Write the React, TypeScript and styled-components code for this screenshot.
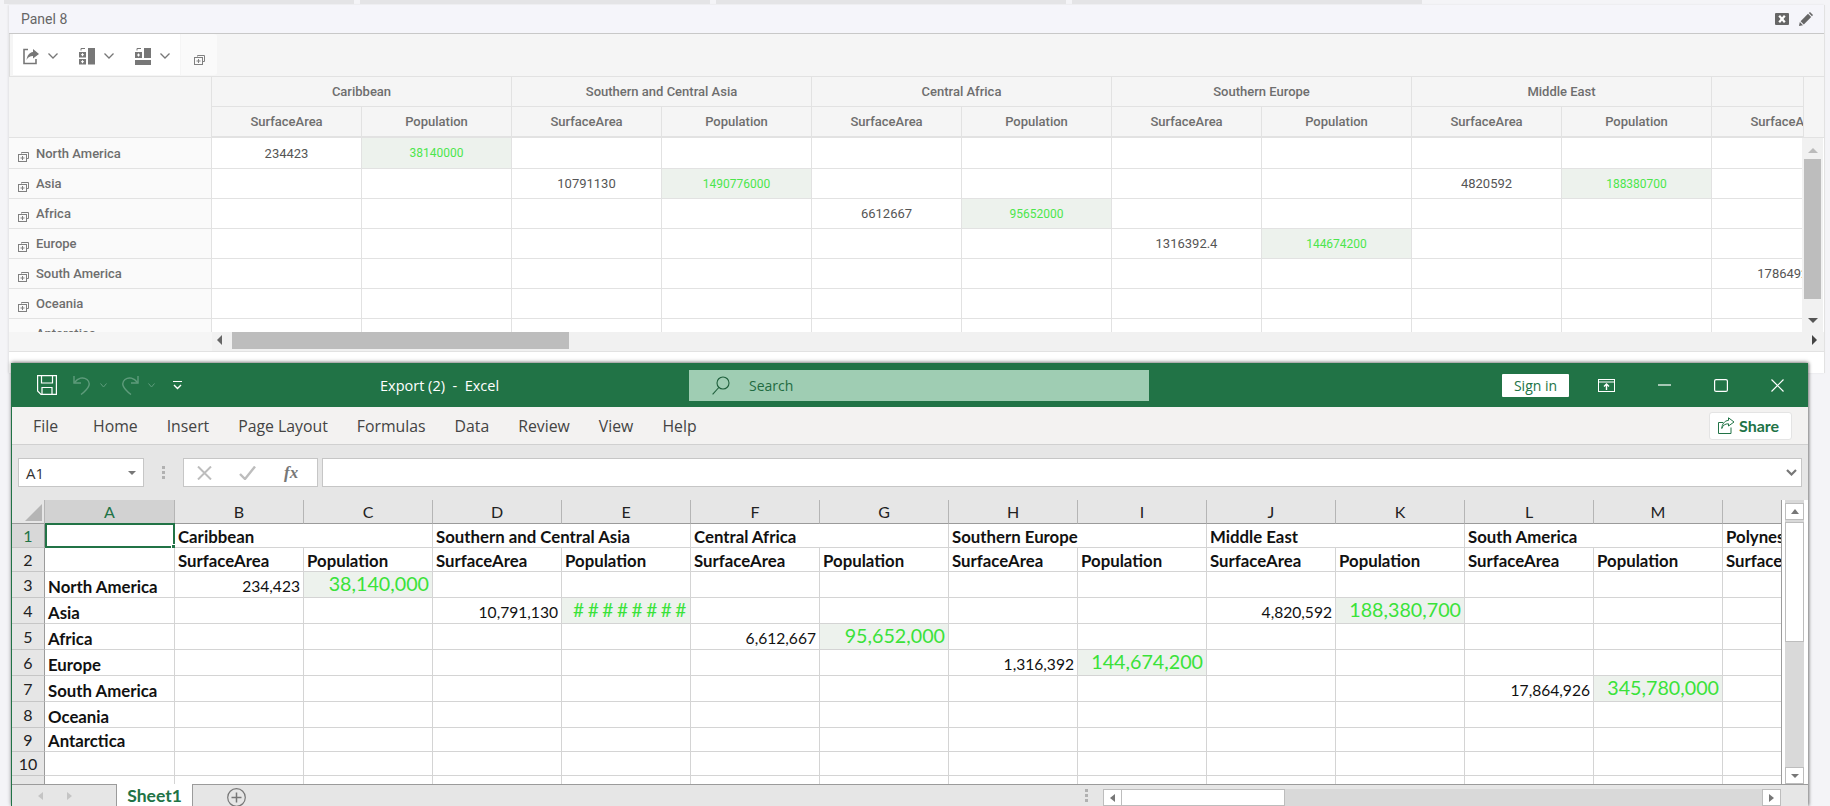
import React from 'react'
import styled, { createGlobalStyle } from 'styled-components'

const GlobalStyle = createGlobalStyle`
  html, body {
    margin: 0;
    padding: 0;
    height: 806px;
    overflow: hidden;
    background-color: #f4f4f7;
  }
`

const Page = styled.div`
  position: relative;
  width: 1830px;
  height: 806px;
  overflow: hidden;
`
const TopStrip = styled.div`
  display: flex;
  gap: 6px;
  height: 5px;
  padding-left: 4px;
`
const StripPiece = styled.div`
  width: 350px;
  height: 4px;
  background-color: #e4e4e6;
`
const Panel = styled.section`
  width: 1815px;
  height: 368px;
  margin-left: 9px;
  background-color: #fff;
  border-right: 1px solid #e2e2e2;
  box-shadow: -1px 0 2px rgba(0, 0, 0, 0.08);
  font-family: Roboto, sans-serif;
`
const PanelHeader = styled.header`
  display: flex;
  align-items: center;
  justify-content: space-between;
  height: 28px;
  padding: 0 11px 0 12px;
  background-color: #f5f5fa;
  border-bottom: 1px solid #c8c8c8;
  font-size: 14px;
  color: #666;
`
const PanelActions = styled.div`
  display: flex;
  align-items: center;
  gap: 10px;
`
const Toolbar = styled.div`
  display: flex;
  height: 42px;
  background-color: #f5f5f5;
  border-bottom: 1px solid #e2e2e2;
  border-left: 1px solid #ddd;
  padding-left: 3px;
`
const ToolGroup = styled.div`
  display: flex;
  align-items: center;
  width: 167px;
  height: 41px;
  padding: 3px 0 0 10px;
  box-sizing: border-box;
  background-color: #fff;
`
const ToolButton = styled.div`
  flex: 0 0 56px;
  display: flex;
  align-items: center;
  gap: 9px;
  svg { display: block; }
`
const ToolSingle = styled.div`
  display: flex;
  justify-content: center;
  width: 36px;
  height: 41px;
  margin-left: 1px;
  padding-top: 21px;
  box-sizing: border-box;
  background-color: #fafafa;
  border-radius: 0 3px 3px 0;
`
const PivotHead = styled.div`
  display: flex;
  height: 60px;
  background-color: #f5f5f5;
  border-bottom: 1px solid #e2e2e2;
  box-sizing: content-box;
`
const PivotCorner = styled.div`
  flex: 0 0 203px;
  box-sizing: border-box;
  border-right: 1px solid #e2e2e2;
`
const PivotHeadClip = styled.div`
  flex: 0 0 1592px;
  overflow: hidden;
  border-right: 1px solid #e2e2e2;
  box-sizing: border-box;
`
const PivotRow = styled.div<{ $h: number }>`
  display: flex;
  height: ${(p) => p.$h}px;
  box-sizing: border-box;
`
const PivotHeadCell = styled.div<{ $w: number }>`
  flex: 0 0 ${(p) => p.$w}px;
  display: flex;
  align-items: center;
  justify-content: center;
  box-sizing: border-box;
  border-right: 1px solid #e2e2e2;
  border-bottom: 1px solid #e2e2e2;
  font-size: 13px;
  color: #6e6e6e;
  font-weight: 500;
  white-space: nowrap;
`
const PivotBody = styled.div`
  display: flex;
  height: 194px;
`
const PivotBodyClip = styled.div`
  flex: 0 0 1793px;
  overflow: hidden;
`
const RowHead = styled.div`
  flex: 0 0 203px;
  display: flex;
  align-items: center;
  gap: 7px;
  padding-left: 9px;
  box-sizing: border-box;
  background-color: #fafafa;
  border-right: 1px solid #e2e2e2;
  border-bottom: 1px solid #e2e2e2;
  font-size: 13px;
  font-weight: 500;
  color: #6e6e6e;
  svg { margin-top: 7px; flex: none; }
`
const ValueCell = styled.div<{ $measure: boolean }>`
  flex: 0 0 150px;
  display: flex;
  align-items: center;
  justify-content: center;
  box-sizing: border-box;
  border-right: 1px solid #e2e2e2;
  border-bottom: 1px solid #e2e2e2;
  background-color: ${(p) => (p.$measure ? '#edf2ed' : '#fff')};
  color: ${(p) => (p.$measure ? '#4ce64c' : '#555')};
  font-size: ${(p) => (p.$measure ? '12px' : '13px')};
  white-space: nowrap;
`
const VBar = styled.div`
  position: relative;
  flex: 0 0 21px;
  background-color: #f1f1f1;
`
const VThumb = styled.div`
  position: absolute;
  left: 2px;
  top: 21px;
  width: 17px;
  height: 140px;
  background-color: #bdbdbd;
`
const ArrowUp = styled.div<{ $c: string }>`
  position: absolute;
  top: 10px;
  left: 6px;
  border: 5px solid transparent;
  border-top: 0;
  border-bottom: 5px solid ${(p) => p.$c};
`
const ArrowDown = styled.div`
  position: absolute;
  bottom: 9px;
  left: 6px;
  border: 5px solid transparent;
  border-bottom: 0;
  border-top: 5px solid #555;
`
const HBarRow = styled.div`
  display: flex;
  height: 19px;
  background-color: #f5f5f5;
  border-bottom: 1px solid #e2e2e2;
  box-sizing: content-box;
`
const HBarTrack = styled.div`
  position: relative;
  flex: 1;
  margin-left: 203px;
  background-color: #f1f1f1;
`
const HThumb = styled.div`
  position: absolute;
  left: 20px;
  top: 0;
  width: 337px;
  height: 17px;
  background-color: #bdbdbd;
`
const ArrowLeft = styled.div<{ $c: string }>`
  position: absolute;
  top: 3px;
  left: 5px;
  border: 5px solid transparent;
  border-left: 0;
  border-right: 5px solid ${(p) => p.$c};
`
const ArrowRight = styled.div`
  position: absolute;
  top: 3px;
  right: 7px;
  border: 5px solid transparent;
  border-right: 0;
  border-left: 5px solid #444;
`

/* the Excel window lies over the panel */
const ExcelWindow = styled.div`
  position: absolute;
  left: 11px;
  top: 363px;
  width: 1796px;
  height: 443px;
  background-color: #e6e6e6;
  border-left: 1px solid #217346;
  box-shadow: 0 -1px 4px rgba(0, 0, 0, 0.35), 1px 0 3px rgba(0, 0, 0, 0.35);
  font-family: Lato, 'Open Sans', sans-serif;
  overflow: hidden;
`
const TitleBar = styled.div`
  position: relative;
  display: flex;
  align-items: center;
  height: 44px;
  background-color: #217346;
  color: #fff;
`
const QuickAccess = styled.div`
  display: flex;
  align-items: center;
  padding-left: 25px;
  flex: 0 0 368px;
  box-sizing: border-box;
  svg { display: block; flex: none; }
`
const WindowTitle = styled.div`
  flex: 0 0 309px;
  font-family: 'Open Sans', sans-serif;
  font-size: 14.5px;
  white-space: pre;
`
const SearchBox = styled.div`
  display: flex;
  align-items: center;
  gap: 19px;
  width: 460px;
  height: 31px;
  padding-left: 23px;
  box-sizing: border-box;
  background-color: #9fcdb3;
  color: #1f6b41;
  font-family: 'Open Sans', sans-serif;
  font-size: 14px;
`
const SignIn = styled.div`
  margin-left: 353px;
  width: 67px;
  height: 23px;
  display: flex;
  align-items: center;
  justify-content: center;
  background-color: #fff;
  border-radius: 1px;
  color: #217346;
  font-family: 'Open Sans', sans-serif;
  font-size: 14px;
`
const WindowControls = styled.div`
  display: flex;
  align-items: center;
  margin-left: 29px;
  svg { display: block; }
`
const ControlSlot = styled.div<{ $w: number }>`
  flex: 0 0 ${(p) => p.$w}px;
`
const MenuBar = styled.nav`
  display: flex;
  align-items: center;
  gap: 29px;
  height: 37px;
  padding: 0 16px 0 21px;
  background-color: #f3f2f1;
  border-bottom: 1px solid #d0d0d0;
  font-family: 'Open Sans', sans-serif;
  font-size: 15.8px;
  color: #444;
`
const MenuItem = styled.span<{ $first?: boolean }>`
  margin-right: ${(p) => (p.$first ? '6px' : '0')};
`
const ShareButton = styled.div`
  display: flex;
  align-items: center;
  gap: 4px;
  width: 83px;
  height: 28px;
  padding-left: 8px;
  margin-left: auto;
  box-sizing: border-box;
  background-color: #fff;
  border: 1px solid #e4e4e4;
  border-radius: 3px;
  color: #217346;
  font-family: Lato, sans-serif;
  font-weight: 700;
  font-size: 16px;
`
const FormulaBar = styled.div`
  display: flex;
  align-items: center;
  height: 55px;
  padding: 13px 6px;
  box-sizing: border-box;
`
const NameBox = styled.div`
  display: flex;
  align-items: center;
  justify-content: space-between;
  width: 126px;
  height: 29px;
  padding: 0 7px;
  box-sizing: border-box;
  background-color: #fff;
  border: 1px solid #c6c6c6;
  font-family: 'Open Sans', sans-serif;
  font-size: 15px;
  color: #333;
`
const CaretDown = styled.div`
  border: 4px solid transparent;
  border-bottom: 0;
  border-top: 4px solid #777;
`
const GripDots = styled.div`
  display: flex;
  flex-direction: column;
  gap: 2px;
  margin: 0 18px;
  i {
    display: block;
    width: 3px;
    height: 3px;
    background-color: #b1b1b1;
  }
`
const FormulaButtons = styled.div`
  display: flex;
  align-items: center;
  width: 135px;
  height: 29px;
  padding-left: 13px;
  gap: 27px;
  box-sizing: border-box;
  background-color: #fff;
  border: 1px solid #c6c6c6;
  color: #777;
  svg { display: block; flex: none; }
`
const FxLabel = styled.span`
  font-family: 'Liberation Serif', serif;
  font-style: italic;
  font-weight: 700;
  font-size: 17px;
  margin-left: 1px;
`
const FormulaInput = styled.div`
  flex: 1;
  display: flex;
  align-items: center;
  justify-content: flex-end;
  height: 29px;
  margin-left: 4px;
  padding-right: 4px;
  box-sizing: border-box;
  background-color: #fff;
  border: 1px solid #c6c6c6;
`
const SheetArea = styled.div`
  display: flex;
  height: 284px;
  background-color: #fff;
`
const SheetClip = styled.div`
  flex: 0 0 1769px;
  height: 284px;
  overflow: hidden;
  border-right: 1px solid #9b9b9b;
  box-sizing: content-box;
`
const SheetGrid = styled.div`
  display: grid;
  grid-template-columns: 33px 130px repeat(13, 129px);
  grid-template-rows: 24px 24px 24px 26px 26px 26px 26px 26px 26px 24px 24px 26px;
  width: 1840px;
  font-size: 15.6px;
  color: #111;
`
const ColHead = styled.div<{ $active?: boolean }>`
  display: flex;
  align-items: center;
  justify-content: center;
  box-sizing: border-box;
  background-color: ${(p) => (p.$active ? '#d2d2d2' : '#e6e6e6')};
  color: ${(p) => (p.$active ? '#217346' : '#222')};
  border-right: 1px solid #b5b5b5;
  border-bottom: 1px solid #9b9b9b;
  font-size: 16px;
`
const CornerCell = styled.div`
  position: relative;
  background-color: #e6e6e6;
  border-bottom: 1px solid #9b9b9b;
  border-right: 1px solid #b5b5b5;
  box-sizing: border-box;
  &::after {
    content: '';
    position: absolute;
    right: 2px;
    bottom: 2px;
    border-style: solid;
    border-width: 0 0 17px 17px;
    border-color: transparent transparent #b5b5b5 transparent;
  }
`
const RowNum = styled.div<{ $active?: boolean }>`
  display: flex;
  align-items: center;
  justify-content: center;
  box-sizing: border-box;
  background-color: ${(p) => (p.$active ? '#d8d8d8' : '#e6e6e6')};
  color: ${(p) => (p.$active ? '#217346' : '#222')};
  border-right: 1px solid #9b9b9b;
  border-bottom: 1px solid #c6c6c6;
  font-size: 16px;
`
const Cell = styled.div<{ $span?: number; $bold?: boolean; $right?: boolean; $big?: boolean }>`
  position: relative;
  display: flex;
  align-items: ${(p) => (p.$big ? 'flex-start' : 'flex-end')};
  justify-content: ${(p) => (p.$right ? 'flex-end' : 'flex-start')};
  grid-column: span ${(p) => p.$span ?? 1};
  padding: 0 3px;
  box-sizing: border-box;
  overflow: hidden;
  white-space: nowrap;
  background-color: ${(p) => (p.$big ? '#edf2ed' : '#fff')};
  border-right: 1px solid #d4d4d4;
  border-bottom: 1px solid #d4d4d4;
  color: ${(p) => (p.$big ? '#3ae23a' : '#111')};
  font-weight: ${(p) => (p.$bold ? 700 : 400)};
  font-size: ${(p) => (p.$big ? '19.7px' : p.$bold ? '16.8px' : '15.6px')};
  line-height: ${(p) => (p.$big ? '24px' : '21px')};
`
const HashFill = styled.span`
  letter-spacing: 3.6px;
  margin-right: -3px;
  font-size: 19px;
`
const SelectionBox = styled.div`
  position: relative;
  border: 2px solid #217346;
  margin: -1px 0 0 0;
  box-sizing: border-box;
  &::after {
    content: '';
    position: absolute;
    right: -4px;
    bottom: -4px;
    width: 6px;
    height: 6px;
    background-color: #217346;
    border: 1px solid #fff;
    box-sizing: border-box;
  }
`
const SheetVBar = styled.div`
  position: relative;
  flex: 0 0 19px;
  margin-left: 3px;
  background-color: #d9d9d9;
`
const SheetArrowBtn = styled.div<{ $bottom?: boolean }>`
  position: absolute;
  left: 0;
  ${(p) => (p.$bottom ? 'bottom: 0;' : 'top: 3px;')}
  width: 19px;
  height: 17px;
  display: flex;
  align-items: center;
  justify-content: center;
  box-sizing: border-box;
  background-color: #fff;
  border: 1px solid #bdbdbd;
`
const SheetVThumb = styled.div`
  position: absolute;
  left: 0;
  top: 22px;
  width: 19px;
  height: 120px;
  box-sizing: border-box;
  background-color: #fff;
  border: 1px solid #bdbdbd;
`
const TriUp = styled.div`
  border: 4px solid transparent;
  border-top: 0;
  border-bottom: 5px solid #777;
`
const TriLeft = styled.div<{ $c?: string }>`
  border: 4px solid transparent;
  border-left: 0;
  border-right: 5px solid ${(p) => p.$c ?? '#777'};
`
const TriRight = styled.div<{ $c?: string }>`
  border: 4px solid transparent;
  border-right: 0;
  border-left: 5px solid ${(p) => p.$c ?? '#777'};
`
const TabBar = styled.div`
  display: flex;
  align-items: flex-end;
  height: 22px;
  background-color: #e6e6e6;
  box-shadow: inset 0 1px 0 #9b9b9b;
`
const TabNav = styled.div`
  display: flex;
  align-items: center;
  gap: 24px;
  flex: 0 0 104px;
  height: 21px;
  padding-left: 26px;
  box-sizing: border-box;
`
const SheetTab = styled.div`
  flex: 0 0 77px;
  height: 22px;
  display: flex;
  align-items: center;
  justify-content: center;
  box-sizing: border-box;
  background-color: #fff;
  border-left: 1px solid #9b9b9b;
  border-right: 1px solid #9b9b9b;
  color: #217346;
  font-weight: 700;
  font-size: 17.5px;
`
const AddSheet = styled.div`
  flex: 0 0 892px;
  height: 21px;
  padding-left: 34px;
  box-sizing: border-box;
  svg { display: block; margin-top: 3px; }
`
const TabGrip = styled(GripDots)`
  margin: 0 15px 0 0;
  height: 21px;
  justify-content: center;
`
const SheetHBar = styled.div`
  display: flex;
  height: 17px;
  width: 678px;
  background-color: #d9d9d9;
`
const HBtn = styled.div`
  flex: 0 0 19px;
  display: flex;
  align-items: center;
  justify-content: center;
  box-sizing: border-box;
  background-color: #fff;
  border: 1px solid #bdbdbd;
`
const HBarThumb = styled.div`
  flex: 0 0 163px;
  background-color: #fff;
  border: 1px solid #bdbdbd;
  border-left: 0;
  box-sizing: border-box;
  margin-right: auto;
`

const ExpandIcon = () => (
  <svg width="11" height="10" viewBox="0 0 11 10" fill="none" stroke="#808080" strokeWidth="1">
    <path d="M3.5 1.5V0.5H10.5V6.5H8.5" />
    <rect x="0.5" y="2.5" width="8" height="7" />
    <path d="M2.5 6H6.5M4.5 4V8" />
  </svg>
)
const ChevronIcon = () => (
  <svg width="10" height="6" viewBox="0 0 10 6" fill="none" stroke="#777" strokeWidth="1.3">
    <path d="M0.5 0.5L5 5L9.5 0.5" />
  </svg>
)
const ExportIcon = () => (
  <svg width="16" height="17" viewBox="0 0 16 17" fill="none">
    <path d="M5 1.5H1V15.5H13V11" stroke="#777" strokeWidth="1.6" />
    <path d="M10 1L16 6L10 10.5V8C7 8 5 9 3.6 12C4 8 6 4.5 10 4Z" fill="#777" />
  </svg>
)
const ColumnsIcon = () => (
  <svg width="16" height="17" viewBox="0 0 16 17" fill="none">
    <path d="M2 2.5V0.5H6" stroke="#777" />
    <rect x="0" y="4" width="7" height="5.5" fill="#777" />
    <rect x="0" y="11" width="7" height="5.5" fill="#777" />
    <path d="M2 6.7H5M3.5 5.2V8.2M2 13.7H5M3.5 12.2V15.2" stroke="#fff" />
    <rect x="9" y="0" width="7" height="16.5" fill="#777" />
  </svg>
)
const RowsIcon = () => (
  <svg width="16" height="17" viewBox="0 0 16 17" fill="none">
    <path d="M2 2.5V0.5H6" stroke="#777" />
    <rect x="0" y="4" width="7" height="6" fill="#777" />
    <path d="M2 7H5M3.5 5.5V8.5" stroke="#fff" />
    <rect x="9" y="0" width="7" height="10" fill="#777" />
    <rect x="0" y="12" width="16" height="5" fill="#777" />
  </svg>
)
const CloseBoxIcon = () => (
  <svg width="14" height="12" viewBox="0 0 14 12">
    <rect width="14" height="12" rx="1" fill="#666" />
    <path d="M4.2 2.8L9.8 9.2M9.8 2.8L4.2 9.2" stroke="#fff" strokeWidth="2.2" />
  </svg>
)
const PencilIcon = () => (
  <svg width="14" height="14" viewBox="0 0 14 14">
    <path d="M0 14L0.8 10L4 13.2Z" fill="#666" />
    <path d="M1.6 9.2L9 1.8L12.2 5L4.8 12.4Z" fill="#666" />
    <path d="M9.8 1L11 0L14 3L13 4.2Z" fill="#666" />
  </svg>
)
const SaveIcon = () => (
  <svg width="20" height="20" viewBox="0 0 20 20" fill="none" stroke="#fff" strokeWidth="1.2">
    <path d="M0.6 0.6H19.4V19.4H4L0.6 16Z" />
    <path d="M4.5 0.6V8H15.5V0.6M5 19.4V12.5H15V19.4" />
  </svg>
)
const UndoIcon = ({ flip }: { flip?: boolean }) => (
  <svg width="18" height="20" viewBox="0 0 18 20" fill="none" stroke="#5f9c7c" strokeWidth="1.4"
    transform={flip ? 'scale(-1 1)' : undefined}>
    <path d="M1 1V8H8" />
    <path d="M1.5 7.5C5 3 10 1.5 14 4.5C18 8 17 12.5 8 19.5" />
  </svg>
)
const SmallChevron = () => (
  <svg width="7" height="5" viewBox="0 0 7 5" fill="none" stroke="#5f9c7c" strokeWidth="1">
    <path d="M0.5 0.5L3.5 4L6.5 0.5" />
  </svg>
)
const CustomizeIcon = () => (
  <svg width="9" height="9" viewBox="0 0 9 9" fill="none" stroke="#fff" strokeWidth="1">
    <path d="M0 0.5H9" />
    <path d="M1 4L4.5 7.5L8 4" strokeWidth="1.4" />
  </svg>
)
const SearchIcon = () => (
  <svg width="18" height="19" viewBox="0 0 18 19" fill="none" stroke="#1f5f3c" strokeWidth="1.1">
    <circle cx="11" cy="7" r="6" />
    <path d="M6.8 11.5L0.6 18.4" />
  </svg>
)
const RibbonIcon = () => (
  <svg width="17" height="13" viewBox="0 0 17 13" fill="none" stroke="#fff" strokeWidth="1">
    <rect x="0.5" y="0.5" width="16" height="12" />
    <path d="M0.5 3H16.5" />
    <path d="M8.5 11V5.5M6 7.5L8.5 5L11 7.5" strokeWidth="1.4" />
  </svg>
)
const MinimizeIcon = () => (
  <svg width="13" height="2" viewBox="0 0 13 2">
    <path d="M0 1H13" stroke="#fff" strokeWidth="1.2" />
  </svg>
)
const MaximizeIcon = () => (
  <svg width="14" height="13" viewBox="0 0 14 13" fill="none">
    <rect x="0.6" y="0.6" width="12.8" height="11.8" rx="1.5" stroke="#fff" strokeWidth="1.2" />
  </svg>
)
const CloseIcon = () => (
  <svg width="13" height="13" viewBox="0 0 13 13">
    <path d="M0.5 0.5L12.5 12.5M12.5 0.5L0.5 12.5" stroke="#fff" strokeWidth="1.2" />
  </svg>
)
const ShareIcon = () => (
  <svg width="17" height="17" viewBox="0 0 17 17" fill="none" stroke="#217346" strokeWidth="1">
    <path d="M5 5.5H0.5V16.5H13V10.5" />
    <path d="M10.5 0.8L16 5L10.5 9V6.8C7 6.8 5 8 3.8 11.5C4 7 6.5 3.7 10.5 3.4Z" />
  </svg>
)
const CrossIcon = () => (
  <svg width="15" height="14" viewBox="0 0 15 14">
    <path d="M1 0.5L14 13.5M14 0.5L1 13.5" stroke="#bdbdbd" strokeWidth="2" />
  </svg>
)
const CheckIcon = () => (
  <svg width="17" height="14" viewBox="0 0 17 14" fill="none">
    <path d="M1 8L6 13L16 0.5" stroke="#bdbdbd" strokeWidth="2.4" />
  </svg>
)
const ThickChevron = () => (
  <svg width="11" height="7" viewBox="0 0 11 7" fill="none" stroke="#777" strokeWidth="2.2">
    <path d="M1 1L5.5 5.5L10 1" />
  </svg>
)
const PlusCircle = () => (
  <svg width="19" height="19" viewBox="0 0 19 19" fill="none" stroke="#777" strokeWidth="1.2">
    <circle cx="9.5" cy="9.5" r="8.8" />
    <path d="M4.5 9.5H14.5M9.5 4.5V14.5" strokeWidth="1.5" />
  </svg>
)

const pivotGroups = ['Caribbean', 'Southern and Central Asia', 'Central Africa', 'Southern Europe', 'Middle East', 'South America']
const pivotRows: { name: string; values: Record<number, string> }[] = [
  { name: 'North America', values: { 0: '234423', 1: '38140000' } },
  { name: 'Asia', values: { 2: '10791130', 3: '1490776000', 8: '4820592', 9: '188380700' } },
  { name: 'Africa', values: { 4: '6612667', 5: '95652000' } },
  { name: 'Europe', values: { 6: '1316392.4', 7: '144674200' } },
  { name: 'South America', values: { 10: '17864926', 11: '345780000' } },
  { name: 'Oceania', values: {} },
  { name: 'Antarctica', values: {} },
]
const measureColumns = Array.from({ length: 12 }, (_, i) => i)

const menuItems = ['Home', 'Insert', 'Page Layout', 'Formulas', 'Data', 'Review', 'View', 'Help']
const sheetColumns = ['A', 'B', 'C', 'D', 'E', 'F', 'G', 'H', 'I', 'J', 'K', 'L', 'M', 'N']
const sheetGroups = [...pivotGroups, 'Polynesia']
const dataColumns = sheetColumns.slice(1)
const sheetRows: { row: number; label: string; values: Record<string, string> }[] = [
  { row: 3, label: 'North America', values: { B: '234,423', C: '38,140,000' } },
  { row: 4, label: 'Asia', values: { D: '10,791,130', E: '########', J: '4,820,592', K: '188,380,700' } },
  { row: 5, label: 'Africa', values: { F: '6,612,667', G: '95,652,000' } },
  { row: 6, label: 'Europe', values: { H: '1,316,392', I: '144,674,200' } },
  { row: 7, label: 'South America', values: { L: '17,864,926', M: '345,780,000' } },
  { row: 8, label: 'Oceania', values: {} },
  { row: 9, label: 'Antarctica', values: {} },
  { row: 10, label: '', values: {} },
  { row: 11, label: '', values: {} },
]
const isPopulation = (col: string) => dataColumns.indexOf(col) % 2 === 1

const PivotPanel = () => (
  <Panel>
    <PanelHeader>
      <span>Panel 8</span>
      <PanelActions>
        <CloseBoxIcon />
        <PencilIcon />
      </PanelActions>
    </PanelHeader>
    <Toolbar>
      <ToolGroup>
        <ToolButton><ExportIcon /><ChevronIcon /></ToolButton>
        <ToolButton><ColumnsIcon /><ChevronIcon /></ToolButton>
        <ToolButton><RowsIcon /><ChevronIcon /></ToolButton>
      </ToolGroup>
      <ToolSingle><ExpandIcon /></ToolSingle>
    </Toolbar>
    <PivotHead>
      <PivotCorner />
      <PivotHeadClip>
        <PivotRow $h={30}>
          {pivotGroups.map((g) => (
            <PivotHeadCell key={g} $w={300}>{g}</PivotHeadCell>
          ))}
        </PivotRow>
        <PivotRow $h={30}>
          {measureColumns.map((i) => (
            <PivotHeadCell key={i} $w={150}>{i % 2 === 0 ? 'SurfaceArea' : 'Population'}</PivotHeadCell>
          ))}
        </PivotRow>
      </PivotHeadClip>
    </PivotHead>
    <PivotBody>
      <PivotBodyClip>
        {pivotRows.map((r, idx) => (
          <PivotRow key={r.name} $h={idx === 0 ? 31 : 30}>
            <RowHead><ExpandIcon /><span>{r.name}</span></RowHead>
            {measureColumns.map((i) => (
              <ValueCell key={i} $measure={r.values[i] !== undefined && i % 2 === 1}>{r.values[i]}</ValueCell>
            ))}
          </PivotRow>
        ))}
      </PivotBodyClip>
      <VBar>
        <ArrowUp $c="#bbb" />
        <VThumb />
        <ArrowDown />
      </VBar>
    </PivotBody>
    <HBarRow>
      <HBarTrack>
        <ArrowLeft $c="#666" />
        <HThumb />
        <ArrowRight />
      </HBarTrack>
    </HBarRow>
  </Panel>
)

const ExcelTitle = () => (
  <TitleBar>
    <QuickAccess>
      <SaveIcon />
      <ControlSlot $w={16} />
      <UndoIcon />
      <ControlSlot $w={9} />
      <SmallChevron />
      <ControlSlot $w={14} />
      <UndoIcon flip />
      <ControlSlot $w={9} />
      <SmallChevron />
      <ControlSlot $w={18} />
      <CustomizeIcon />
    </QuickAccess>
    <WindowTitle>{'Export (2)  -  Excel'}</WindowTitle>
    <SearchBox>
      <SearchIcon />
      <span>Search</span>
    </SearchBox>
    <SignIn>Sign in</SignIn>
    <WindowControls>
      <RibbonIcon />
      <ControlSlot $w={43} />
      <MinimizeIcon />
      <ControlSlot $w={43} />
      <MaximizeIcon />
      <ControlSlot $w={43} />
      <CloseIcon />
    </WindowControls>
  </TitleBar>
)

const ExcelSheet = () => (
  <SheetArea>
    <SheetClip>
      <SheetGrid>
        <CornerCell />
        {sheetColumns.map((c) => (
          <ColHead key={c} $active={c === 'A'}>{c}</ColHead>
        ))}

        <RowNum $active>1</RowNum>
        <SelectionBox />
        {sheetGroups.map((g, i) => (
          <Cell key={g} $bold $span={i < 6 ? 2 : 1}>{g}</Cell>
        ))}

        <RowNum>2</RowNum>
        <Cell />
        {dataColumns.map((c) => (
          <Cell key={c} $bold>{isPopulation(c) ? 'Population' : 'SurfaceArea'}</Cell>
        ))}

        {sheetRows.map((r) => (
          <React.Fragment key={r.row}>
            <RowNum>{r.row}</RowNum>
            <Cell $bold>{r.label}</Cell>
            {dataColumns.map((c) => {
              const value = r.values[c]
              const big = value !== undefined && isPopulation(c)
              return (
                <Cell key={c} $right $big={big}>
                  {value === '########' ? <HashFill>{value}</HashFill> : value}
                </Cell>
              )
            })}
          </React.Fragment>
        ))}
      </SheetGrid>
    </SheetClip>
    <SheetVBar>
      <SheetArrowBtn><TriUp /></SheetArrowBtn>
      <SheetVThumb />
      <SheetArrowBtn $bottom><CaretDown /></SheetArrowBtn>
    </SheetVBar>
  </SheetArea>
)

const ExcelTabs = () => (
  <TabBar>
    <TabNav>
      <TriLeft $c="#c4c4c4" />
      <TriRight $c="#c4c4c4" />
    </TabNav>
    <SheetTab>Sheet1</SheetTab>
    <AddSheet><PlusCircle /></AddSheet>
    <TabGrip><i /><i /><i /></TabGrip>
    <SheetHBar>
      <HBtn><TriLeft /></HBtn>
      <HBarThumb />
      <HBtn><TriRight /></HBtn>
    </SheetHBar>
  </TabBar>
)

const App = () => (
  <Page>
    <GlobalStyle />
    <TopStrip>
      <StripPiece />
      <StripPiece />
      <StripPiece />
      <StripPiece />
    </TopStrip>
    <PivotPanel />
    <ExcelWindow>
      <ExcelTitle />
      <MenuBar>
        <MenuItem $first>File</MenuItem>
        {menuItems.map((m) => (
          <MenuItem key={m}>{m}</MenuItem>
        ))}
        <ShareButton><ShareIcon />Share</ShareButton>
      </MenuBar>
      <FormulaBar>
        <NameBox>A1<CaretDown /></NameBox>
        <GripDots><i /><i /><i /></GripDots>
        <FormulaButtons>
          <CrossIcon />
          <CheckIcon />
          <FxLabel>fx</FxLabel>
        </FormulaButtons>
        <FormulaInput><ThickChevron /></FormulaInput>
      </FormulaBar>
      <ExcelSheet />
      <ExcelTabs />
    </ExcelWindow>
  </Page>
)

export default App
